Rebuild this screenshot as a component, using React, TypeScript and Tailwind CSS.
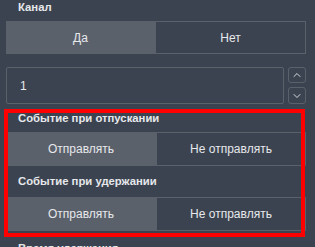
import { ChevronUp, ChevronDown } from 'lucide-react'

function Toggle({ left, right }: { left: string; right: string }) {
  return (
    <div className="flex h-[34px] w-[300px] text-[12px] text-[#e6e8eb]">
      <div className="flex flex-1 items-center justify-center border border-[#5b616b] bg-[#5b616b]">
        {left}
      </div>
      <div className="flex flex-1 items-center justify-center border border-[#5b616b]">
        {right}
      </div>
    </div>
  )
}

function Label({ children, className }: { children: string; className?: string }) {
  return (
    <div className={`pl-3 text-[11.3px] font-bold text-[#e6e8eb] ${className ?? ''}`}>
      {children}
    </div>
  )
}

export default function App() {
  return (
    <div
      className="relative h-[247px] w-[315px] overflow-hidden bg-[#3c4350] pl-[6px]"
      style={{ fontFamily: '"Liberation Sans", Arial, sans-serif' }}
    >
      <Label className="flex h-[21px] items-center pb-[6px]">Канал</Label>
      <div className="flex h-[33px] w-[300px] text-[12px] text-[#e6e8eb]">
        <div className="flex flex-1 items-center justify-center bg-[#5b616b]">Да</div>
        <div className="flex flex-1 items-center justify-center border border-[#5b616b]">
          Нет
        </div>
      </div>

      <div className="mt-[13px] flex h-[37px] w-[300px] gap-1">
        <div className="flex flex-1 items-center rounded-[2px] border border-[#5b616b] pl-[13px] text-[12px] text-[#e6e8eb]">
          1
        </div>
        <div className="flex w-[18px] flex-col justify-between">
          <div className="flex h-[16px] items-center justify-center rounded-[3px] border border-[#5b616b] text-[#d6d9de]">
            <ChevronUp size={12} strokeWidth={2} />
          </div>
          <div className="flex h-[17px] items-center justify-center rounded-[3px] border border-[#5b616b] text-[#d6d9de]">
            <ChevronDown size={12} strokeWidth={2} />
          </div>
        </div>
      </div>

      <Label className="flex h-[28px] items-center">Событие при отпускании</Label>
      <Toggle left="Отправлять" right="Не отправлять" />
      <Label className="flex h-[31px] items-center">Событие при удержании</Label>
      <Toggle left="Отправлять" right="Не отправлять" />
      <Label className="flex h-[26px] items-end">Время удержания</Label>

      <div className="pointer-events-none absolute left-[4px] top-[109px] h-[128px] w-[301px] border-[4px] border-[#ff0000]" />
    </div>
  )
}
